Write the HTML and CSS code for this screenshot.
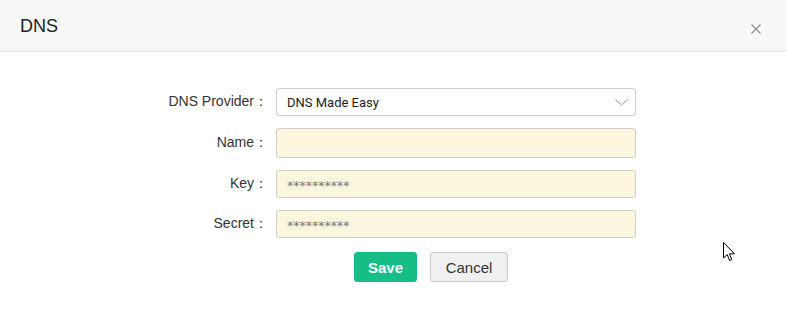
FILE: index.html
```html
<!DOCTYPE html>
<html>
  <head>
    <meta charset="utf-8">
    <title>DNS</title>
    <link rel="stylesheet" href="styles.css">
  </head>
  <body>
    <div class="dialog">
      <div class="dialog-header">
        <span class="title">DNS</span>
        <span class="close">
          <svg width="12" height="12" viewBox="0 0 12 12">
            <path d="M1.5 1.5L10.5 10.5M10.5 1.5L1.5 10.5" stroke="#8c8c8c" stroke-width="1.1" fill="none" />
          </svg>
        </span>
      </div>
      <div class="dialog-body">
        <form class="form">
          <label class="label">DNS Provider：</label>
          <div class="field select">
            <span>DNS Made Easy</span>
            <svg width="13" height="7" viewBox="0 0 13 7">
              <path d="M0.5 0.5L6.5 6L12.5 0.5" stroke="#999" stroke-width="1" fill="none" />
            </svg>
          </div>

          <label class="label">Name：</label>
          <div class="field input tall"></div>

          <label class="label">Key：</label>
          <div class="field input"><span class="dots">**********</span></div>

          <label class="label">Secret：</label>
          <div class="field input"><span class="dots">**********</span></div>
        </form>
        <div class="actions">
          <button class="btn btn-primary" type="button">Save</button>
          <button class="btn btn-default" type="button">Cancel</button>
        </div>
      </div>
      <svg class="cursor" width="13" height="20" viewBox="0 0 13 20">
        <path d="M0.5 0.5L0.5 16L4.2 12.6L6.6 18.5L8.8 17.6L6.4 11.8L11.5 11.8Z" fill="#fff" stroke="#000" stroke-width="1" stroke-linejoin="round" />
      </svg>
    </div>
  </body>
</html>
```

FILE: styles.css
```css
* {
  margin: 0;
  box-sizing: border-box;
}

html,
body {
  height: 100%;
  background: #fff;
}

body {
  font-family: Roboto, "Liberation Sans", Arial, sans-serif;
  color: #333;
}

.dialog {
  position: relative;
  height: 100%;
}

.dialog-header {
  display: flex;
  align-items: center;
  justify-content: space-between;
  height: 52px;
  padding: 0 24px 0 20px;
  background-color: #f7f7f7;
  border-bottom: 1px solid #e6e6e6;
}

.dialog-header .title {
  font-family: "Liberation Sans", Arial, sans-serif;
  font-size: 18px;
  color: #222;
  padding-top: 2px;
}

.dialog-header .close {
  display: flex;
  padding-top: 6px;
}

.dialog-body {
  padding-top: 36px;
}

.form {
  display: grid;
  grid-template-columns: 130px 360px;
  grid-row-gap: 12px;
  margin-left: 146px;
  align-items: center;
}

.label {
  font-family: "Liberation Sans", Arial, sans-serif;
  font-size: 14px;
  color: #333;
  text-align: right;
  padding-right: 8px;
}

.field {
  height: 28px;
  border: 1px solid #cdcdcd;
  border-radius: 3px;
  display: flex;
  align-items: center;
  padding: 0 10px;
  font-size: 13px;
}

.field.tall {
  height: 30px;
}

.select {
  background-color: #fff;
  justify-content: space-between;
  color: #222;
}

.select svg {
  margin-right: -3px;
  margin-top: 1px;
}

.input {
  background-color: #fcf6de;
}

.dots {
  font-family: "DejaVu Sans", sans-serif;
  color: #777;
  font-size: 12.5px;
  padding-top: 3px;
}

.actions {
  display: flex;
  gap: 13px;
  margin-top: 14px;
  margin-left: 354px;
}

.btn {
  height: 30px;
  border-radius: 3px;
  font-family: "Liberation Sans", Arial, sans-serif;
  font-size: 15px;
  cursor: pointer;
}

.btn-primary {
  width: 63px;
  border: 1px solid #16bd86;
  background-color: #16bd86;
  color: #fff;
  font-weight: bold;
}

.btn-default {
  width: 78px;
  border: 1px solid #c8c8c8;
  background-color: #f0f0f0;
  color: #333;
}

.cursor {
  position: absolute;
  left: 723px;
  top: 242px;
}
```
